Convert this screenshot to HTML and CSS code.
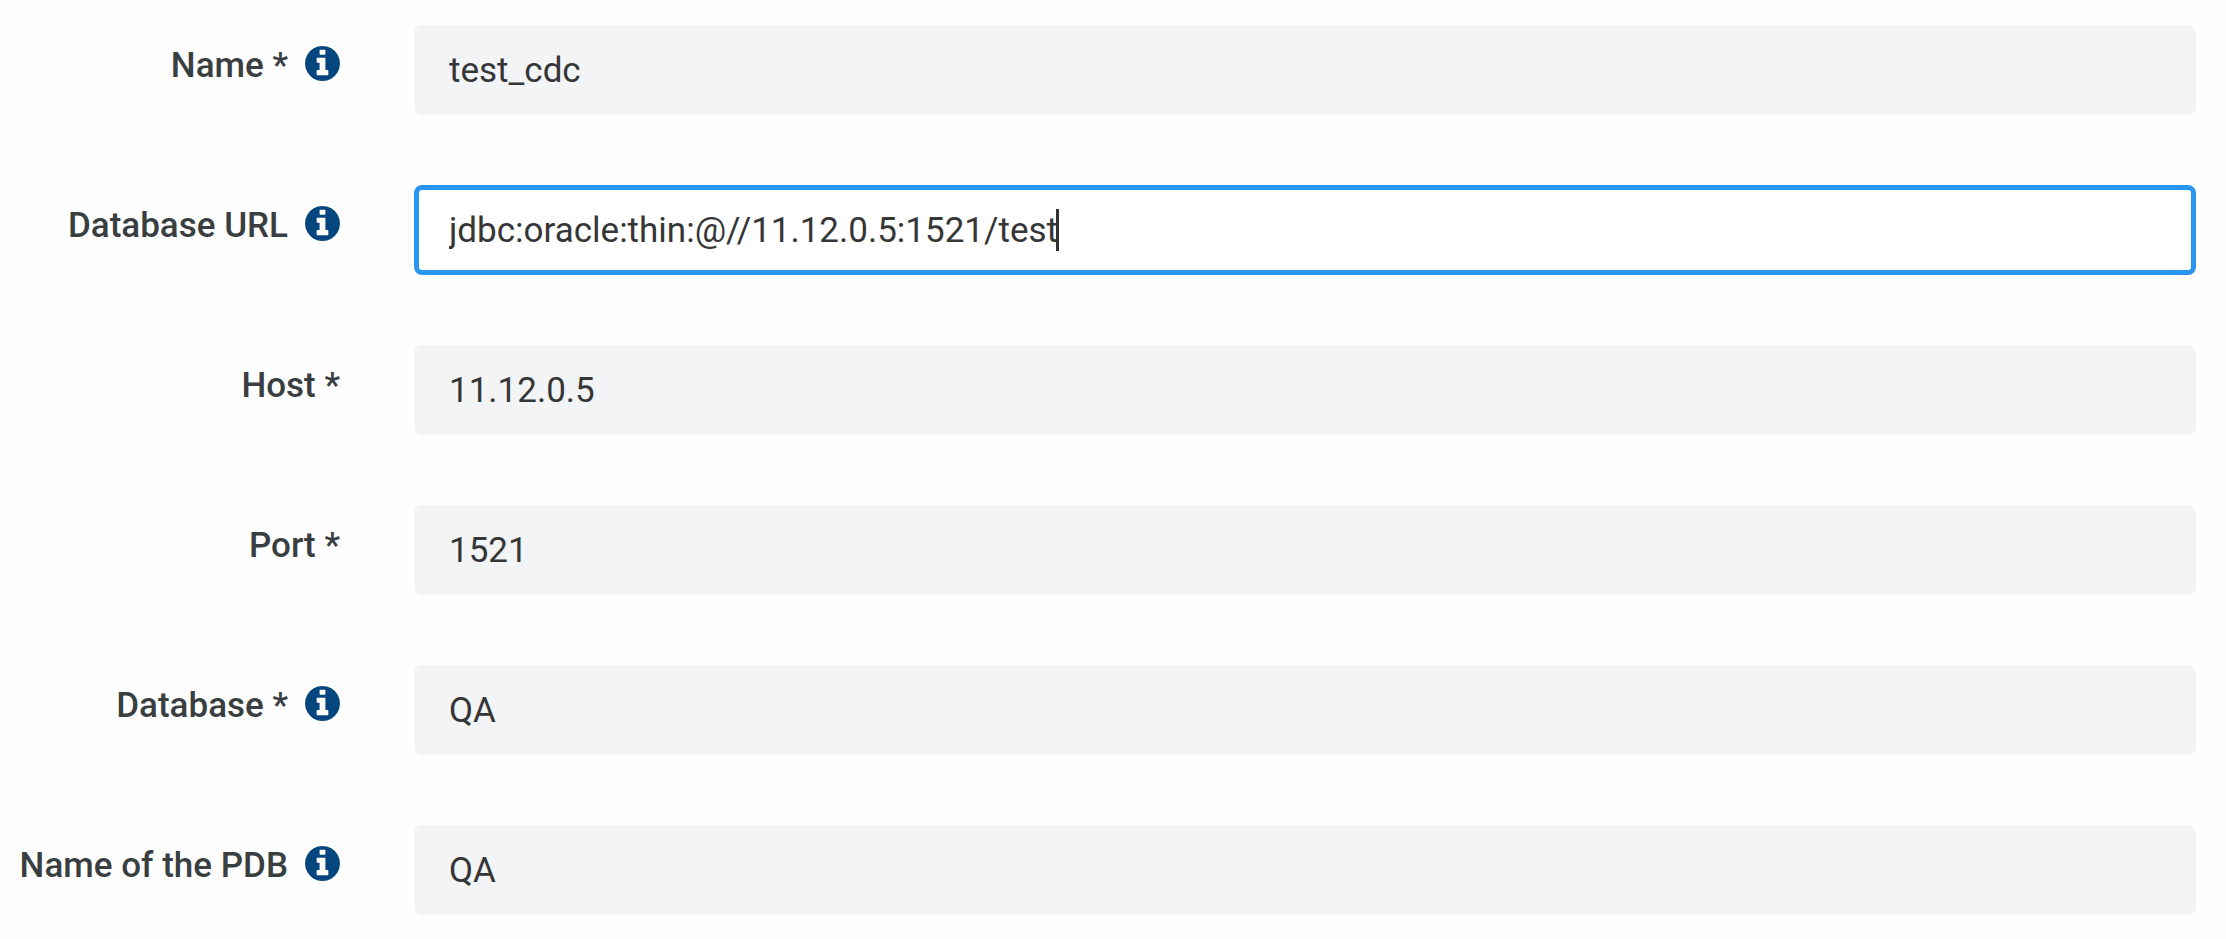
FILE: index.html
```
<!DOCTYPE html>
<html lang="en">
<head>
    <meta charset="UTF-8">
    <meta name="viewport" content="width=device-width, initial-scale=1.0">
    <title>Connection settings</title>
    <link rel="stylesheet" href="styles.css">
</head>
<body>

    <!-- shared icon -->
    <svg class="sprite" aria-hidden="true">
        <symbol id="info" viewBox="128 128 1536 1536">
            <path d="M1152 1376v-160q0-14-9-23t-23-9h-96v-512q0-14-9-23t-23-9h-320q-14 0-23 9t-9 23v160q0 14 9 23t23 9h96v320h-96q-14 0-23 9t-9 23v160q0 14 9 23t23 9h448q14 0 23-9t9-23zm-128-896v-160q0-14-9-23t-23-9h-192q-14 0-23 9t-9 23v160q0 14 9 23t23 9h192q14 0 23-9t9-23zm640 416q0 209-103 385.5t-279.5 279.5-385.5 103-385.5-103-279.5-279.5-103-385.5 103-385.5 279.5-279.5 385.5-103 385.5 103 279.5 279.5 103 385.5z"/>
        </symbol>
    </svg>

    <form class="settings-form">
        <div class="row">
            <label for="name">Name * <svg class="info-icon"><use href="#info"/></svg></label>
            <div class="field">
                <input type="text" id="name" name="name" value="test_cdc" required>
            </div>
        </div>
        <div class="row">
            <label for="url">Database URL <svg class="info-icon"><use href="#info"/></svg></label>
            <div class="field">
                <input type="text" class="active" id="url" name="url" value="jdbc:oracle:thin:@//11.12.0.5:1521/test" spellcheck="false">
                <span class="caret"></span>
            </div>
        </div>
        <div class="row">
            <label for="host">Host *</label>
            <div class="field">
                <input type="text" id="host" name="host" value="11.12.0.5" required>
            </div>
        </div>
        <div class="row">
            <label for="port">Port *</label>
            <div class="field">
                <input type="text" id="port" name="port" value="1521" required>
            </div>
        </div>
        <div class="row">
            <label for="database">Database * <svg class="info-icon"><use href="#info"/></svg></label>
            <div class="field">
                <input type="text" id="database" name="database" value="QA" required>
            </div>
        </div>
        <div class="row">
            <label for="pdb">Name of the PDB <svg class="info-icon"><use href="#info"/></svg></label>
            <div class="field">
                <input type="text" id="pdb" name="pdb" value="QA">
            </div>
        </div>
    </form>

</body>
</html>
```
FILE: styles.css
```
* {
    box-sizing: border-box;
}

body {
    margin: 0;
    background-color: #fefefe;
    font-family: Roboto, sans-serif;
    font-size: 35px;
    line-height: 42px;
}

.sprite {
    display: none;
}

.settings-form {
    display: flex;
    flex-direction: column;
    gap: 70px;
    padding: 25px 30px 20px 0;
}

.row {
    display: grid;
    grid-template-columns: 340px 1fr;
    column-gap: 74px;
    align-items: start;
}

label {
    display: flex;
    justify-content: flex-end;
    align-items: center;
    gap: 17px;
    padding-top: 20px;
    color: #393f41;
    font-weight: 500;
    white-space: nowrap;
}

.info-icon {
    width: 35px;
    height: 35px;
    margin-bottom: 5px;
    fill: #05467e;
}

.field {
    position: relative;
}

input {
    display: block;
    width: 100%;
    height: 90px;
    padding: 0 30px;
    border: 5px solid #f3f4f6;
    border-radius: 8px;
    outline: none;
    background-color: #f3f4f6;
    color: #363636;
    font: inherit;
}

input:focus,
input.active {
    border-color: #2a96f3;
    background-color: #fff;
}

/* text cursor at the end of the url */
.caret {
    position: absolute;
    top: 24px;
    left: 642px;
    width: 3px;
    height: 42px;
    background-color: #333;
}
```
